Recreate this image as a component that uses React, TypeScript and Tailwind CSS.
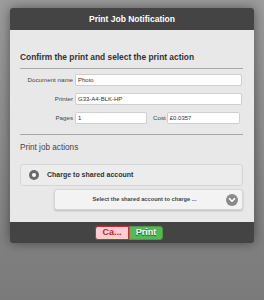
import { ChevronDown } from 'lucide-react';

const font = { fontFamily: '"Liberation Sans", Arial, sans-serif' };

function Field({ label, value, labelW = 'w-[53px]', inputW = 'w-[167px]' }: { label: string; value: string; labelW?: string; inputW?: string }) {
  return (
    <div className="flex items-center gap-[2px]">
      <span className={`${labelW} text-right text-[6.2px] leading-[12px] text-[#444] whitespace-nowrap`}>{label}</span>
      <div className={`${inputW} h-[12px] bg-white border border-[#cfcfcf] rounded-[2px] px-[2px] text-[6px] leading-[10px] text-[#333]`}>
        {value}
      </div>
    </div>
  );
}

export default function App() {
  return (
    <div
      className="w-[264px] h-[300px] overflow-hidden pt-[8px] px-[10px] bg-gradient-to-b from-[#9c9c9c] to-[#7a7a7a]"
      style={font}
    >
      <div className="w-[244px] rounded-[3px] overflow-hidden shadow-[0_0_12px_rgba(0,0,0,0.45)]">
        <div className="h-[22px] bg-[#444444] flex items-center justify-center text-white font-bold text-[8.5px]">
          Print Job Notification
        </div>

        <div className="h-[192px] bg-[#e8e8e8] pl-[10px] pr-[11px]">
          <div className="pt-[22px] pb-[6px] border-b border-[#a8a8a8] text-[8.4px] leading-[10px] font-bold text-[#333]">
            Confirm the print and select the print action
          </div>

          <div className="pt-[5px] flex flex-col gap-[7px]">
            <Field label="Document name" value="Photo" />
            <Field label="Printer" value="G33-A4-BLK-HP" />
            <div className="flex items-center">
              <Field label="Pages" value="1" inputW="w-[72px]" />
              <span className="ml-[6px] mr-[1px] text-[6.2px] leading-[12px] text-[#444]">Cost</span>
              <div className="w-[73px] h-[12px] bg-white border border-[#cfcfcf] rounded-[2px] px-[2px] text-[6px] leading-[10px] text-[#333]">
                £0.0357
              </div>
            </div>
          </div>

          <div className="mt-[10px] border-t border-[#a8a8a8]" />

          <div className="pt-[8px] text-[8.2px] leading-[10px] text-[#444]">Print job actions</div>

          <div className="mt-[11px] h-[22px] rounded-[3px] border border-[#d6d6d6] bg-[#ececec] flex items-center pl-[8px] gap-[8px]">
            <div className="w-[10px] h-[10px] rounded-full bg-[#6a6a6a] flex items-center justify-center">
              <div className="w-[4px] h-[4px] rounded-full bg-white" />
            </div>
            <span className="text-[7px] font-bold text-[#333]">Charge to shared account</span>
          </div>

          <div className="mt-[3px] ml-[34px] h-[21px] rounded-[3px] border border-[#d6d6d6] bg-[#f3f3f3] shadow-[0_1px_2px_rgba(0,0,0,0.2)] flex items-center pl-[8px] pr-[4px]">
            <span className="flex-1 text-center text-[5.7px] font-bold text-[#444]">Select the shared account to charge ...</span>
            <div className="w-[12px] h-[12px] rounded-full bg-[#8a8a8a] flex items-center justify-center">
              <ChevronDown size={10} strokeWidth={4} color="#ffffff" />
            </div>
          </div>
        </div>

        <div className="h-[21px] bg-[#444444] flex items-center justify-center pr-[6px]">
          <div className="flex">
            <div className="w-[34px] h-[14px] bg-[#ffcfcf] border border-[#c23030] rounded-l-[3px] flex items-center justify-center text-[9px] font-bold text-[#cc2020]">
              Ca...
            </div>
            <div className="w-[34px] h-[14px] bg-[#55b955] border border-[#4a9a4a] rounded-r-[3px] flex items-center justify-center text-[9px] font-bold text-white [text-shadow:0_1px_1px_rgba(0,0,0,0.6)]">
              Print
            </div>
          </div>
        </div>
      </div>
    </div>
  );
}
